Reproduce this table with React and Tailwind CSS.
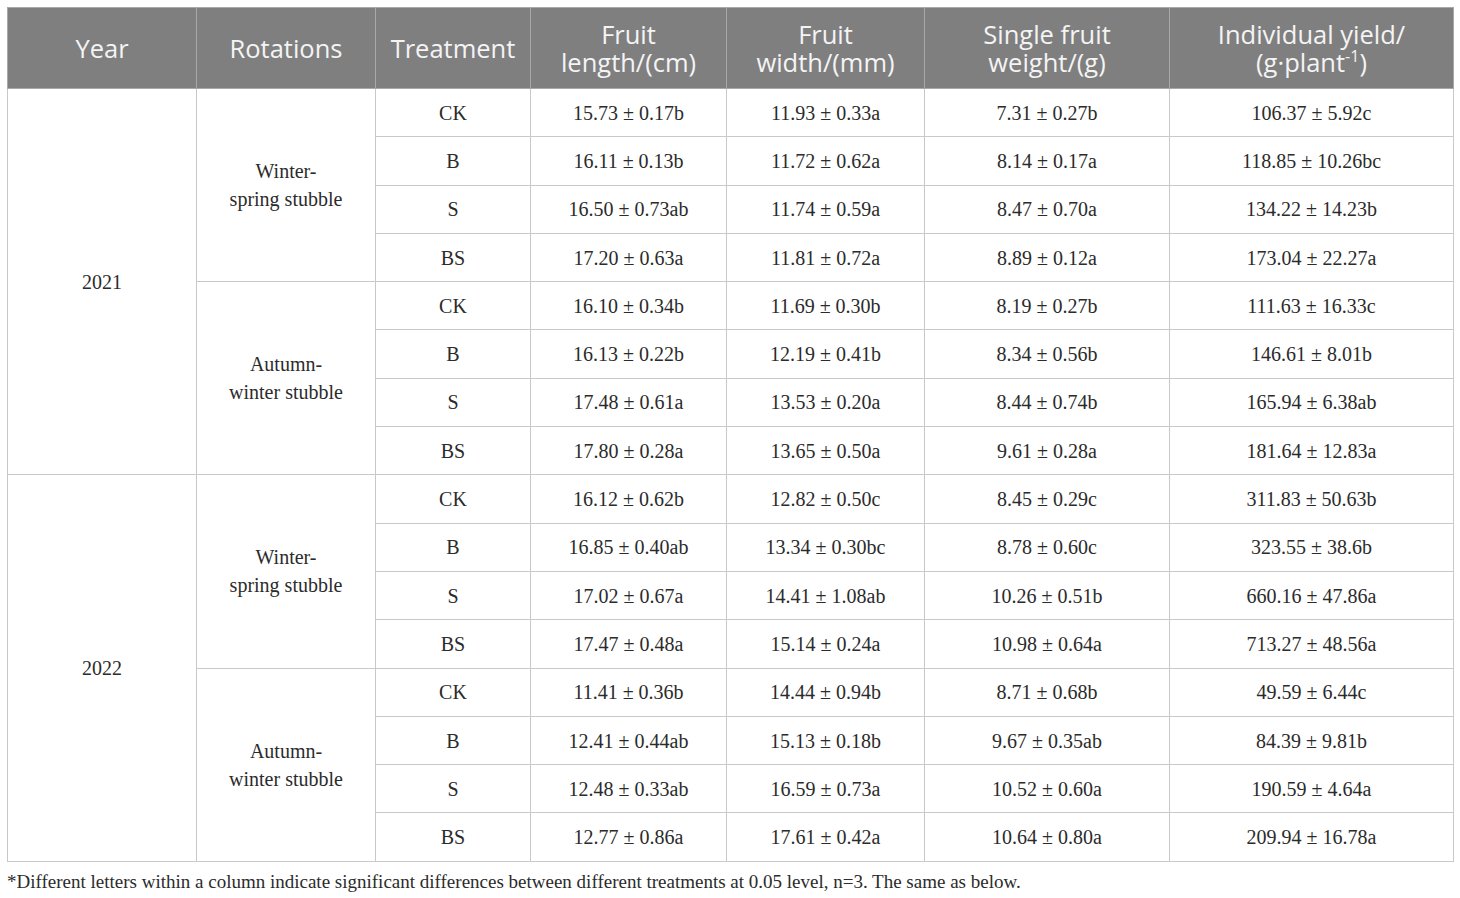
import React from 'react';

const data = [
  {
    year: '2021',
    groups: [
      {
        rot: ['Winter-', 'spring stubble'],
        rows: [
          ['CK', '15.73 ± 0.17b', '11.93 ± 0.33a', '7.31 ± 0.27b', '106.37 ± 5.92c'],
          ['B', '16.11 ± 0.13b', '11.72 ± 0.62a', '8.14 ± 0.17a', '118.85 ± 10.26bc'],
          ['S', '16.50 ± 0.73ab', '11.74 ± 0.59a', '8.47 ± 0.70a', '134.22 ± 14.23b'],
          ['BS', '17.20 ± 0.63a', '11.81 ± 0.72a', '8.89 ± 0.12a', '173.04 ± 22.27a'],
        ],
      },
      {
        rot: ['Autumn-', 'winter stubble'],
        rows: [
          ['CK', '16.10 ± 0.34b', '11.69 ± 0.30b', '8.19 ± 0.27b', '111.63 ± 16.33c'],
          ['B', '16.13 ± 0.22b', '12.19 ± 0.41b', '8.34 ± 0.56b', '146.61 ± 8.01b'],
          ['S', '17.48 ± 0.61a', '13.53 ± 0.20a', '8.44 ± 0.74b', '165.94 ± 6.38ab'],
          ['BS', '17.80 ± 0.28a', '13.65 ± 0.50a', '9.61 ± 0.28a', '181.64 ± 12.83a'],
        ],
      },
    ],
  },
  {
    year: '2022',
    groups: [
      {
        rot: ['Winter-', 'spring stubble'],
        rows: [
          ['CK', '16.12 ± 0.62b', '12.82 ± 0.50c', '8.45 ± 0.29c', '311.83 ± 50.63b'],
          ['B', '16.85 ± 0.40ab', '13.34 ± 0.30bc', '8.78 ± 0.60c', '323.55 ± 38.6b'],
          ['S', '17.02 ± 0.67a', '14.41 ± 1.08ab', '10.26 ± 0.51b', '660.16 ± 47.86a'],
          ['BS', '17.47 ± 0.48a', '15.14 ± 0.24a', '10.98 ± 0.64a', '713.27 ± 48.56a'],
        ],
      },
      {
        rot: ['Autumn-', 'winter stubble'],
        rows: [
          ['CK', '11.41 ± 0.36b', '14.44 ± 0.94b', '8.71 ± 0.68b', '49.59 ± 6.44c'],
          ['B', '12.41 ± 0.44ab', '15.13 ± 0.18b', '9.67 ± 0.35ab', '84.39 ± 9.81b'],
          ['S', '12.48 ± 0.33ab', '16.59 ± 0.73a', '10.52 ± 0.60a', '190.59 ± 4.64a'],
          ['BS', '12.77 ± 0.86a', '17.61 ± 0.42a', '10.64 ± 0.80a', '209.94 ± 16.78a'],
        ],
      },
    ],
  },
];

const th = 'border border-[#a8a8a8] font-normal text-[25.5px] leading-[28px] text-[#f4f4f4] px-1';
const td = 'border border-[#c9c9c9] h-[48.3px] p-0 text-center align-middle';

export default function App() {
  return (
    <div className="bg-white w-[1460px] h-[898px] pt-[7px] pl-[7px] text-[#2b2b2b]">
      <table
        className="table-fixed border-collapse w-[1446px] border border-[#c9c9c9]"
        style={{ fontFamily: '"Liberation Serif", serif' }}
      >
        <colgroup>
          <col className="w-[189px]" />
          <col className="w-[179px]" />
          <col className="w-[155px]" />
          <col className="w-[196px]" />
          <col className="w-[198px]" />
          <col className="w-[245px]" />
          <col className="w-[284px]" />
        </colgroup>
        <thead>
          <tr className="bg-[#7f7f7f] h-[81px]" style={{ fontFamily: '"Open Sans", sans-serif' }}>
            <th className={th}>Year</th>
            <th className={th}>Rotations</th>
            <th className={th}>Treatment</th>
            <th className={th}>Fruit<br />length/(cm)</th>
            <th className={th}>Fruit<br />width/(mm)</th>
            <th className={th}>Single fruit<br />weight/(g)</th>
            <th className={th}>
              Individual yield/<br />(g·plant<span className="text-[16px] leading-none relative -top-[10px]">-1</span>)
            </th>
          </tr>
        </thead>
        <tbody className="text-[20px]">
          {data.map((y) =>
            y.groups.map((g, gi) =>
              g.rows.map((r, ri) => (
                <tr key={y.year + gi + ri}>
                  {gi === 0 && ri === 0 && (
                    <td rowSpan={8} className={td}>{y.year}</td>
                  )}
                  {ri === 0 && (
                    <td rowSpan={4} className={td + ' leading-[28px]'}>
                      {g.rot[0]}<br />{g.rot[1]}
                    </td>
                  )}
                  {r.map((c, ci) => (
                    <td key={ci} className={td}>{c}</td>
                  ))}
                </tr>
              ))
            )
          )}
        </tbody>
      </table>
      <p className="mt-[8px] text-[19px] leading-[24px] text-[#2b2b2b]" style={{ fontFamily: '"Liberation Serif", serif' }}>
        *Different letters within a column indicate significant differences between different treatments at 0.05 level, n=3. The same as below.
      </p>
    </div>
  );
}
